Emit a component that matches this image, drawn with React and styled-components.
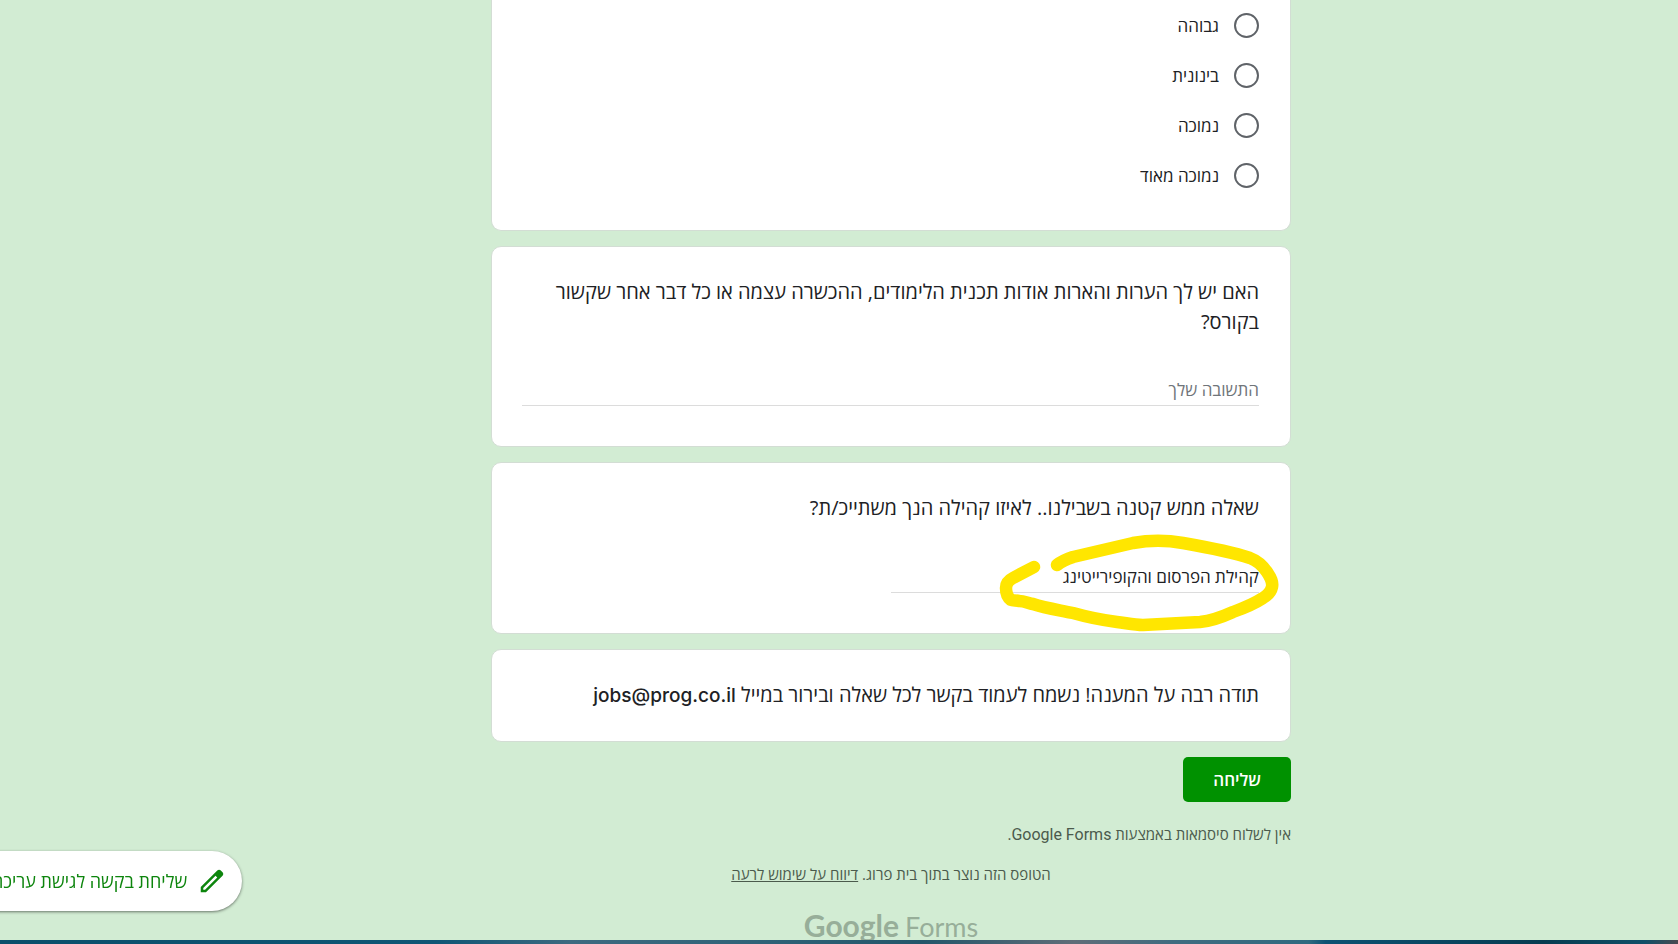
import React, { useState } from "react";
import styled, { createGlobalStyle, ThemeProvider } from "styled-components";

const theme = {
    background: "#d2ecd3",
    card: "#ffffff",
    border: "#d3ddd4",
    line: "#dcdcdc",
    text: "#202124",
    muted: "#70757a",
    footer: "#4b5a4c",
    accent: "#009100",
    marker: "#ffe600",
};

const GlobalStyle = createGlobalStyle`
    * {
        box-sizing: border-box;
    }

    body {
        margin: 0;
        background-color: ${({ theme }) => theme.background};
        color: ${({ theme }) => theme.text};
        font-family: "Open Sans", "Noto Sans", sans-serif;
        font-size: 17px;
    }

    input,
    button {
        font: inherit;
    }
`;

const Page = styled.div`
    min-height: 100vh;
    padding-left: 104px;
    overflow: hidden;
`;

const Form = styled.form`
    display: flex;
    flex-direction: column;
    gap: 15px;
    max-width: 800px;
    margin: 0 auto;
`;

const Card = styled.section`
    position: relative;
    padding: 30px 31px 30px 30px;
    border: 1px solid ${({ theme }) => theme.border};
    border-radius: 10px;
    background-color: ${({ theme }) => theme.card};
`;

const ChoiceCard = styled(Card)`
    padding-top: 0;
    border-top: 0;
    border-radius: 0 0 10px 10px;
`;

const QuestionCard = styled(Card)`
    padding-bottom: 40px;
`;

const Option = styled.label`
    display: flex;
    align-items: center;
    gap: 15px;
    height: 50px;
    cursor: pointer;
`;

const Radio = styled.input`
    appearance: none;
    width: 25px;
    height: 25px;
    margin: 0;
    border: 2px solid #5f6368;
    border-radius: 50%;
    cursor: pointer;

    &:checked {
        border-color: ${({ theme }) => theme.accent};
        background: radial-gradient(
            ${({ theme }) => theme.accent} 50%,
            transparent 55%
        );
    }
`;

const Title = styled.label`
    display: block;
    min-height: 31px;
    font-size: 20px;
    line-height: 30px;
`;

const Email = styled.bdi`
    font-family: Inter, sans-serif;
    font-weight: 500;
    font-size: 19px;
`;

const Answer = styled.input`
    display: block;
    width: ${({ $short }) => ($short ? "50%" : "100%")};
    height: 39px;
    margin-top: 30px;
    padding: 6px 0 0;
    border: 0;
    border-bottom: 1px solid ${({ theme }) => theme.line};
    outline: 0;
    background: transparent;
    color: inherit;

    &::placeholder {
        color: ${({ theme }) => theme.muted};
        opacity: 1;
    }
`;

const Marker = styled.svg`
    position: absolute;
    top: 68px;
    right: 10px;
    width: 282px;
    height: 104px;
    pointer-events: none;

    path {
        fill: none;
        stroke: ${({ theme }) => theme.marker};
        stroke-width: 12.5;
        stroke-linecap: round;
        stroke-linejoin: round;
    }
`;

const Submit = styled.button`
    align-self: flex-start;
    height: 45px;
    padding: 0 30px;
    border: 0;
    border-radius: 5px;
    background-color: ${({ theme }) => theme.accent};
    color: #ffffff;
    font-weight: 600;
    cursor: pointer;
`;

const Footer = styled.footer`
    max-width: 800px;
    margin: 22px auto 0;
    color: ${({ theme }) => theme.footer};
    font-size: 15px;
    line-height: 20px;
`;

const Note = styled.p`
    margin: 0 0 19px;
    text-align: ${({ $center }) => ($center ? "center" : "start")};

    bdi {
        font-family: Roboto, sans-serif;
        font-size: 16px;
    }

    a {
        color: inherit;
    }
`;

const Logo = styled.div`
    display: flex;
    align-items: baseline;
    justify-content: center;
    gap: 6px;
    direction: ltr;
    color: #97ae99;
    font-family: Lato, sans-serif;
    font-size: 27px;
    line-height: 44px;

    b {
        font-size: 30px;
    }
`;

const EditRequest = styled.button`
    position: fixed;
    left: -38px;
    bottom: 33px;
    display: flex;
    align-items: center;
    gap: 10px;
    height: 60px;
    padding: 0 15px 0 30px;
    border: 0;
    border-radius: 30px;
    background-color: ${({ theme }) => theme.card};
    box-shadow: 0 1px 3px rgba(0, 0, 0, 0.5);
    color: #0d850d;
    font-size: 18px;
    white-space: nowrap;
    cursor: pointer;

    svg {
        width: 30px;
        height: 30px;
        fill: currentColor;
    }
`;

const Desktop = styled.div`
    position: fixed;
    bottom: 0;
    left: 0;
    width: 100%;
    height: 4px;
    background: linear-gradient(
        to right,
        #0a4f6b,
        #0f5675 26%,
        #3d6a80 34%,
        #2f6378 45%,
        #23566a 55%,
        #5f6d78 64%,
        #3f6c80 70%,
        #2f6a80 78%,
        #0c5273 79%,
        #063c50 92%,
        #0f5068 98%,
        #4a4a50
    );
`;

const options = ["גבוהה", "בינונית", "נמוכה", "נמוכה מאוד"];

function App() {
    const [level, setLevel] = useState("");
    const [notes, setNotes] = useState("");
    const [community, setCommunity] = useState("קהילת הפרסום והקופירייטינג");

    return (
        <ThemeProvider theme={theme}>
            <GlobalStyle />
            <Page dir="rtl" lang="he">
                <Form onSubmit={(e) => e.preventDefault()}>
                    <ChoiceCard>
                        {options.map((option) => (
                            <Option key={option}>
                                <Radio
                                    type="radio"
                                    name="level"
                                    checked={level === option}
                                    onChange={() => setLevel(option)}
                                />
                                {option}
                            </Option>
                        ))}
                    </ChoiceCard>
                    <QuestionCard>
                        <Title htmlFor="notes">
                            האם יש לך הערות והארות אודות תכנית הלימודים, ההכשרה
                            עצמה או כל דבר אחר שקשור בקורס?
                        </Title>
                        <Answer
                            id="notes"
                            placeholder="התשובה שלך"
                            value={notes}
                            onChange={(e) => setNotes(e.target.value)}
                        />
                    </QuestionCard>
                    <QuestionCard>
                        <Title htmlFor="community">
                            שאלה ממש קטנה בשבילנו.. לאיזו קהילה הנך משתייכ/ת?
                        </Title>
                        <Answer
                            id="community"
                            $short
                            value={community}
                            onChange={(e) => setCommunity(e.target.value)}
                        />
                        <Marker viewBox="998 531 282 104" aria-hidden="true">
                            <path d="M1057 565C1062 561 1067 559 1073 557L1133 543C1150 540 1166 540 1183 543C1206 547 1229 551 1250 558C1258 561 1263 566 1267 572C1271 578 1273 582 1272 587C1271 592 1268 595 1263 598C1254 604 1244 608 1233 612C1222 617 1211 621 1200 622L1143 625C1134 625 1126 623 1117 622C1102 620 1087 617 1073 613C1059 610 1045 608 1033 604C1028 603 1024 601 1019 601C1016 600 1013 601 1011 600C1007 597 1006 593 1006 588C1006 583 1009 580 1013 578L1034 567" />
                        </Marker>
                    </QuestionCard>
                    <Card>
                        <Title as="div">
                            תודה רבה על המענה! נשמח לעמוד בקשר לכל שאלה ובירור
                            במייל <Email>jobs@prog.co.il</Email>
                        </Title>
                    </Card>
                    <Submit type="submit">שליחה</Submit>
                </Form>
                <Footer>
                    <Note>
                        אין לשלוח סיסמאות באמצעות <bdi>Google Forms</bdi>.
                    </Note>
                    <Note $center>
                        הטופס הזה נוצר בתוך בית פרוג.{" "}
                        <a href="#report">דיווח על שימוש לרעה</a>
                    </Note>
                    <Logo>
                        <b>Google</b> Forms
                    </Logo>
                </Footer>
                <EditRequest type="button">
                    <svg viewBox="0 0 24 24" aria-hidden="true">
                        <path d="M20.41 4.94l-1.35-1.35c-.78-.78-2.05-.78-2.83 0L3 16.82V21h4.18L20.41 7.77c.79-.78.79-2.05 0-2.83zm-14 14.12L5 19v-1.36l9.82-9.82 1.41 1.41-9.82 9.83z" />
                    </svg>
                    שליחת בקשה לגישת עריכה
                </EditRequest>
                <Desktop />
            </Page>
        </ThemeProvider>
    );
}

export default App;
